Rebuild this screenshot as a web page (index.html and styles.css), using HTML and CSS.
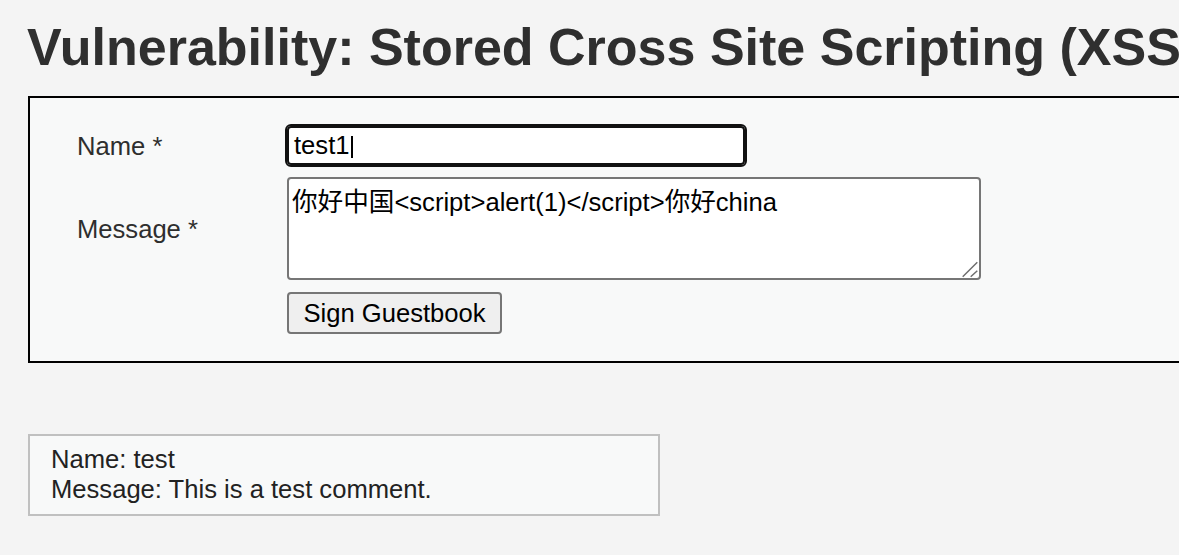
FILE: index.html
```html
<!DOCTYPE html>
<html lang="en">
<head>
<meta charset="utf-8">
<title>Vulnerability: Stored Cross Site Scripting (XSS)</title>
<link rel="stylesheet" href="styles.css">
</head>
<body>
<div class="page">
  <h1 class="title">Vulnerability: Stored Cross Site Scripting (XSS)</h1>
  <div class="code-area">
    <form class="guestbook">
      <label class="lbl">Name *</label>
      <div class="field field-focus">test1<span class="caret"></span></div>
      <label class="lbl">Message *</label>
      <div class="ta-wrap">
        <textarea class="ta">你好中国&lt;script&gt;alert(1)&lt;/script&gt;你好china</textarea>
        <svg class="grip" width="20" height="20" viewBox="0 0 20 20"><path d="M3.7 18.7 L18.3 4.3 M11.7 18.7 L18.3 12.7" stroke="#6e6e6e" stroke-width="1.5" fill="none"/></svg>
      </div>
      <span class="spacer"></span>
      <button type="button" class="btn">Sign Guestbook</button>
    </form>
  </div>
  <div class="entry">Name: test<br>Message: This is a test comment.</div>
</div>
</body>
</html>
```
FILE: styles.css
```css
html, body {
  margin: 0;
  padding: 0;
  overflow: hidden;
  background: #f4f4f4;
}
body {
  font-family: "Liberation Sans", "Noto Sans CJK SC", sans-serif;
  font-size: 25.6px;
  color: #2e2e2e;
}
.page {
  padding: 17px 0 0 28px;
}
.title {
  margin: 0 0 19px -1px;
  font-size: 52px;
  line-height: 60px;
  font-weight: bold;
  color: #2f2f2f;
  white-space: nowrap;
}
.code-area {
  width: 1300px;
  border: 2px solid #000;
  background: #f8f9f9;
}
.guestbook {
  display: grid;
  grid-template-columns: 210px max-content;
  row-gap: 12px;
  align-items: center;
  padding: 28px 0 27px 47px;
  margin: 0;
}
.lbl {
  line-height: 30px;
  color: #2e2e2e;
}
.field {
  box-sizing: border-box;
  width: 458px;
  height: 39px;
  border: 2px solid #111;
  outline: 2px solid #111;
  border-radius: 4px;
  background: #fff;
  padding: 0 5px;
  color: #000;
  line-height: 35px;
  display: flex;
  align-items: center;
}
.caret {
  display: inline-block;
  width: 2px;
  height: 22px;
  background: #000;
  margin-left: 1px;
  margin-top: 3px;
}
.ta-wrap {
  position: relative;
  width: 694px;
  height: 103px;
}
.ta {
  box-sizing: border-box;
  width: 694px;
  height: 103px;
  border: 2px solid #767676;
  border-radius: 4px;
  background: #fff;
  padding: 8px 3px;
  margin: 0;
  font-family: "Liberation Sans", "Noto Sans CJK SC", sans-serif;
  font-size: 25.6px;
  line-height: 30px;
  color: #000;
  resize: none;
  display: block;
}
.grip {
  position: absolute;
  right: 2px;
  bottom: 2px;
}
.btn {
  box-sizing: border-box;
  width: 215px;
  height: 42px;
  padding: 0;
  border: 2px solid #767676;
  border-radius: 4px;
  background: #efefef;
  font-family: "Liberation Sans", sans-serif;
  font-size: 25.6px;
  color: #000;
}
.entry {
  box-sizing: border-box;
  width: 632px;
  margin-top: 71px;
  border: 2px solid #c0c0c0;
  background: #f8f9f9;
  padding: 8px 20px 10px 21px;
  line-height: 30px;
  color: #222;
}
```
